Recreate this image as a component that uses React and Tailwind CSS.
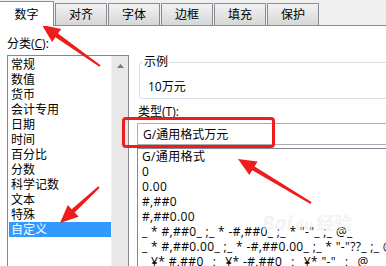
const tabs = ["对齐", "字体", "边框", "填充", "保护"];

const categories = [
  "常规",
  "数值",
  "货币",
  "会计专用",
  "日期",
  "时间",
  "百分比",
  "分数",
  "科学记数",
  "文本",
  "特殊",
  "自定义",
];

const formats = [
  "G/通用格式",
  "0",
  "0.00",
  "#,##0",
  "#,##0.00",
  '_ * #,##0_ ;_ * -#,##0_ ;_ * "-"_ ;_ @_ ',
  '_ * #,##0.00_ ;_ * -#,##0.00_ ;_ * "-"??_ ;_ @_ ',
  '_ ¥* #,##0_ ;_ ¥* -#,##0_ ;_ ¥* "-"_ ;_ @_ ',
];

//builds a tapered arrow polygon from tail (x1,y1) to tip (x2,y2)
function Arrow({ x1, y1, x2, y2 }) {
  const dx = x2 - x1;
  const dy = y2 - y1;
  const len = Math.hypot(dx, dy);
  const ux = dx / len;
  const uy = dy / len;
  const px = -uy;
  const py = ux;
  const head = 18;
  const hw = 8;
  const bx = x2 - ux * head;
  const by = y2 - uy * head;
  const pts = [
    [x1 + px * 1, y1 + py * 1],
    [bx + px * 2.2, by + py * 2.2],
    [bx + px * hw, by + py * hw],
    [x2, y2],
    [bx - px * hw, by - py * hw],
    [bx - px * 2.2, by - py * 2.2],
    [x1 - px * 1, y1 - py * 1],
  ];
  return (
    <polygon
      points={pts.map((p) => p.map((v) => v.toFixed(1)).join(",")).join(" ")}
      fill="#ee1d1d"
    />
  );
}

export default function App() {
  return (
    <div
      className="relative h-[266px] w-[386px] overflow-hidden bg-white text-[12px] leading-[15px] text-black"
      style={{ fontFamily: '"Open Sans", "Noto Sans CJK SC", sans-serif' }}
    >
      {/* tab strip */}
      <div className="flex h-[26px] items-end border-b border-[#898c95] bg-[#f0f0f0]">
        <div className="relative z-10 mb-[-1px] flex h-[25px] w-[54px] items-center justify-center border-r border-t border-[#898c95] bg-white">
          数字
        </div>
        <div className="ml-[1px] flex gap-[1px]">
          {tabs.map((t) => (
            <div
              key={t}
              className="flex h-[22px] w-[52px] items-center justify-center border border-b-0 border-[#898c95] bg-linear-to-b from-[#f3f3f3] to-[#d6d6d6]"
            >
              {t}
            </div>
          ))}
        </div>
      </div>

      {/* body */}
      <div className="flex pl-[7px]">
        {/* category column */}
        <div className="w-[122px] shrink-0">
          <div className="mt-[10px]">
            分类(<span className="underline">C</span>):
          </div>
          <div className="mt-[4px] flex h-[230px] border border-[#828790]">
            <div className="flex-1 pt-[1px] pl-[1px]">
              {categories.map((c) => (
                <div
                  key={c}
                  className={
                    c === "自定义"
                      ? "bg-[#3399ff] pl-[2px] text-white"
                      : "pl-[2px]"
                  }
                >
                  {c}
                </div>
              ))}
            </div>
            <div className="flex w-[17px] justify-center border-l border-[#f0f0f0] bg-[#e8e8e8] pt-[8px]">
              <svg width="7" height="4" viewBox="0 0 7 4">
                <polygon points="0,4 3.5,0 7,4" fill="#7a7a7a" />
              </svg>
            </div>
          </div>
        </div>

        {/* type column */}
        <div className="ml-[8px] w-[260px] shrink-0">
          <fieldset className="ml-[2px] mt-[28px] h-[45px] rounded-[3px] border border-[#d5dfe5]">
            <legend className="ml-[3px] px-[1px] leading-[16px]">示例</legend>
            <div className="mt-[9px] pl-[8px]">10万元</div>
          </fieldset>
          <div className="ml-[1px] mt-[5px]">
            类型(<span className="underline">T</span>):
          </div>
          <div className="mt-[4px] flex h-[22px] items-center border border-[#abadb3] pl-[5px]">
            G/通用格式万元
          </div>
          <div className="mt-[3px] h-[130px] border border-[#828790] pl-[4px]">
            {formats.map((f) => (
              <div key={f} className="whitespace-pre tracking-[0.35px]">
                {f}
              </div>
            ))}
          </div>
        </div>
      </div>

      {/* faint watermark */}
      <div className="pointer-events-none absolute left-[262px] top-[212px] flex items-baseline gap-[3px] text-[#ececec] opacity-60">
        <span className="text-[20px] font-bold italic leading-[22px]">Bai</span>
        <span className="text-[14px] font-bold leading-[22px]">du</span>
        <span className="text-[18px] font-bold leading-[22px]">经验</span>
      </div>

      {/* annotations */}
      <div className="pointer-events-none absolute left-[122px] top-[117px] h-[31px] w-[153px] rounded-[4px] border-[3px] border-[#ee1d1d]" />
      <svg
        className="pointer-events-none absolute left-0 top-0"
        width="386"
        height="266"
      >
        <Arrow x1={100} y1={66} x2={42} y2={25} />
        <Arrow x1={99} y1={187} x2={60} y2={223} />
        <Arrow x1={311} y1={203} x2={238} y2={159} />
      </svg>
    </div>
  );
}
